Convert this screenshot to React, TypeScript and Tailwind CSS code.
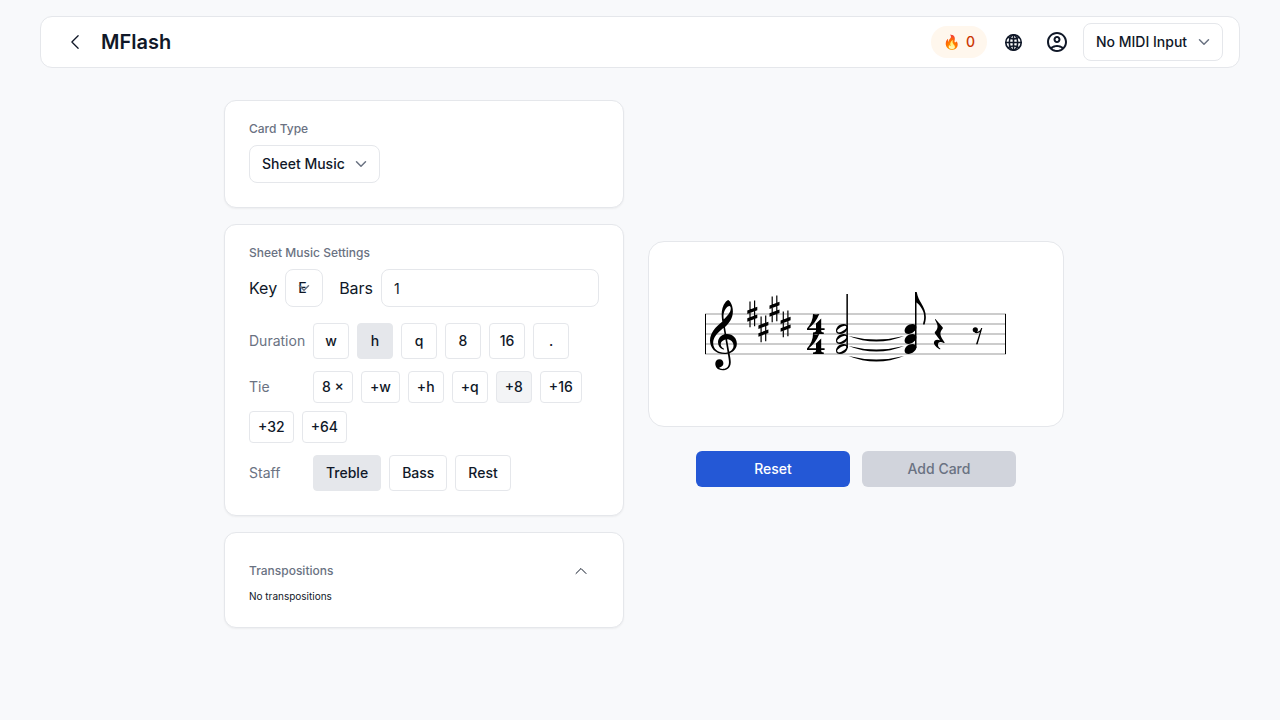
import { useState } from "react";
import type { ReactNode } from "react";
import { ChevronDown } from "lucide-react";
import { HiOutlineChevronLeft, HiOutlineChevronUp } from "react-icons/hi2";
import { IoGlobeOutline } from "react-icons/io5";
import { MdOutlineAccountCircle } from "react-icons/md";

const durations = ["w", "h", "q", "8", "16", "."];
const tieOptions = ["+w", "+h", "+q", "+8", "+16", "+32", "+64"];
const staffs = ["Treble", "Bass", "Rest"];

const G_CLEF =
  "M364 -252c-245 0 -364 165 -364 339c0 202 153 345 297 464c12 10 11 12 9 24c-7 41 -14 106 -14 164c0 104 24 229 98 311c20 22 51 48 65 48c11 0 37 -28 52 -50c41 -60 65 -146 65 -233c0 -153 -82 -280 -190 -381c-6 -6 -8 -7 -6 -19l25 -145c3 -18 3 -18 29 -18c147 0 241 -113 241 -241c0 -113 -67 -198 -168 -238c-14 -6 -15 -5 -13 -17c11 -62 29 -157 29 -214c0 -170 -130 -200 -197 -200c-151 0 -190 98 -190 163c0 62 40 115 107 115c61 0 96 -47 96 -102c0 -58 -36 -85 -67 -94c-23 -7 -32 -10 -32 -17c0 -13 26 -29 80 -29c59 0 158 18 158 166c0 47 -15 134 -27 201c-2 12 -4 11 -15 9c-20 -4 -46 -6 -68 -6zM80 20c0 -139 113 -236 288 -236c20 0 40 2 56 5c15 3 16 3 14 14l-50 298c-2 11 -4 12 -20 8c-61 -17 -100 -60 -100 -117c0 -46 30 -89 72 -107c7 -3 15 -6 15 -13c0 -6 -4 -11 -12 -11c-7 0 -19 3 -27 6c-68 23 -115 87 -115 177c0 85 57 164 145 194c18 6 18 5 15 24l-21 128c-2 11 -4 12 -14 4c-47 -38 -93 -75 -153 -142c-83 -94 -93 -173 -93 -232zM354 624c70 65 165 165 165 262c0 40 -14 62 -34 62c-58 0 -148 -110 -148 -257c0 -28 3 -50 6 -65c2 -9 5 -8 11 -2zM441 117c-12 1 -13 -2 -11 -14l49 -285c2 -12 4 -12 16 -6c56 28 94 79 94 142c0 88 -67 156 -148 163z";
const HALF_HEAD =
  "M97 -125c-55 0 -97 30 -97 83c0 52 47 167 196 167c58 0 99 -32 99 -83c0 -33 -33 -167 -198 -167zM75 -87c48 0 189 88 189 131c0 7 -3 13 -6 19c-7 12 -18 21 -37 21c-47 0 -192 -79 -192 -128c0 -7 3 -14 6 -20c7 -12 19 -23 40 -23z";
const BLACK_HEAD = "M0 -42c0 86 88 167 198 167c57 0 97 -32 97 -83c0 -85 -108 -167 -198 -167c-54 0 -97 31 -97 83z";
const EIGHTH_FLAG =
  "M238 -790c-5 -17 -22 -23 -28 -19s-16 13 -16 29c0 4 1 9 3 15c17 45 24 92 24 137c0 59 -9 116 -24 150c-36 85 -131 221 -197 233v239c0 12 8 15 19 15c10 0 18 -6 21 -22c16 -96 58 -182 109 -261c63 -100 115 -218 115 -343c0 -78 -26 -173 -26 -173z";
const SHARP =
  "M-2.9 -12.6h1.2v25.9h-1.2zM1.7 -13.6h1.2v25.9h-1.2zM-5 -3.6L5 -7.3v3.5L-5 -.1zM-5 4.2L5 .5v3.5L-5 7.7z";
const FOUR =
  "M6 0c2 .6 4 .6 6.3 0C10 6 6 11 1.8 14.2H9V9.6L14.2 4.6V14.2H17.6V16H14.2c0 1.8.6 2.4 2.6 2.6V20H6V18.6c2.2-.2 3-.8 3-2.6H0V14.4C4 10 6 5 6 0z";
const QUARTER_REST =
  "M2.2 .2L9 8C9.9 9 9.4 9.6 8.8 10.3C6.6 13 6.4 15.5 8.6 19.5L11.1 23.3C11.4 23.9 11 24.2 10.4 23.9C7.1 22.4 4.9 23 4.6 25.2C4.4 27 5.4 28.4 6.8 29.6C7.2 30.2 6.7 30.5 6.2 30.2C3.1 28.5 .4 26 .5 23.6C.7 20.8 3.6 20 6.6 21.3L1.6 14.4C1.2 13.6 1.4 13.1 1.9 12.6C4.8 9.4 5 6.6 1.9 1.2C1.4 .4 1.8 -.1 2.2 .2z";

// Glyphs are in font units (250 per staff space) with y pointing up.
function Glyph({ d, x, y }: { d: string; x: number; y: number }) {
  return <path d={d} transform={`translate(${x} ${y}) scale(0.04 -0.04)`} />;
}

function Score() {
  return (
    <svg viewBox="0 0 302 88" className="w-full max-w-[302px]" role="img" aria-label="E major chord in 4/4">
      {[24, 34, 44, 54, 64].map((y) => (
        <path key={y} d={`M0 ${y}H301`} stroke="#999999" />
      ))}
      <rect x="0" y="24" width="1" height="40" />
      <rect x="300" y="24" width="1" height="40" />

      <Glyph d={G_CLEF} x={5} y={54} />

      {[
        [47.3, 24],
        [58.4, 39],
        [69.5, 19],
        [80.6, 34]
      ].map(([x, y]) => (
        <path key={x} d={SHARP} transform={`translate(${x} ${y})`} />
      ))}

      <path d={FOUR} transform="translate(102 24)" />
      <path d={FOUR} transform="translate(102 44)" />

      {[39, 49, 59].map((y) => (
        <g key={y}>
          <Glyph d={HALF_HEAD} x={131} y={y} />
          <Glyph d={BLACK_HEAD} x={199.6} y={y} />
          <path d={`M143.5 ${y + 7}Q171.5 ${y + 18} 199 ${y + 7}Q171.5 ${y + 14} 143.5 ${y + 7}z`} />
        </g>
      ))}
      <rect x="141.4" y="4" width="1.5" height="54" />
      <rect x="210" y="2" width="1.5" height="56" />
      <Glyph d={EIGHTH_FLAG} x={210.3} y={2.3} />

      <path d={QUARTER_REST} transform="translate(228.4 29)" />
      <circle cx="270.3" cy="39.8" r="2.6" />
      <path d="M270 42C273.5 42.3 275.3 40.6 276.2 38L277.3 38L272.6 54.2H271L274.9 42C273.8 43 272 43.4 270 43z" />
    </svg>
  );
}

function Select({ id, label, options, className }: { id: string; label?: string; options: string[]; className: string }) {
  return (
    <div className="relative">
      <select
        id={id}
        aria-label={label}
        className={`block h-[38px] appearance-none rounded-lg border border-gray-200 bg-white text-sm font-medium text-gray-900 ${className}`}
      >
        {options.map((option) => (
          <option key={option}>{option}</option>
        ))}
      </select>
      <ChevronDown className="pointer-events-none absolute inset-y-0 right-[10px] my-auto size-[18px] text-gray-500" />
    </div>
  );
}

function Card({ children }: { children: ReactNode }) {
  return <section className="rounded-xl border border-gray-200 bg-white px-6 pt-5 pb-6 shadow-xs">{children}</section>;
}

function OptionButton({
  children,
  active,
  className,
  onClick
}: {
  children: ReactNode;
  active?: boolean;
  className: string;
  onClick?: () => void;
}) {
  return (
    <button
      type="button"
      onClick={onClick}
      className={`rounded border border-gray-200 text-sm font-medium text-gray-900 ${
        active ? "bg-gray-200" : ""
      } ${className}`}
    >
      {children}
    </button>
  );
}

export default function App() {
  const [duration, setDuration] = useState("h");
  const [staff, setStaff] = useState("Treble");

  return (
    <div className="min-h-screen bg-[#f8f9fb] pt-4 font-['Inter',sans-serif] text-gray-900">
      <header className="mx-10 flex items-center justify-between rounded-xl border border-gray-200 bg-white px-4 py-1.5">
        <div className="flex items-center gap-2">
          <button type="button" aria-label="Back" className="flex size-9 items-center justify-center">
            <HiOutlineChevronLeft className="size-5" />
          </button>
          <h1 className="text-xl font-semibold">MFlash</h1>
        </div>
        <div className="flex items-center gap-2">
          <div className="flex h-8 items-center gap-1.5 rounded-full bg-orange-50 px-3 text-sm font-medium text-orange-700">
            <span>🔥</span>
            <span>0</span>
          </div>
          <button type="button" aria-label="Language" className="flex size-9 items-center justify-center">
            <IoGlobeOutline className="size-[19px] [&_path]:stroke-[44px]" />
          </button>
          <button type="button" aria-label="Account" className="flex size-9 items-center justify-center">
            <MdOutlineAccountCircle className="size-6" />
          </button>
          <Select id="midi" label="MIDI input" options={["No MIDI Input"]} className="pr-[34px] pl-3" />
        </div>
      </header>

      <main className="mx-auto mt-8 flex max-w-[848px] items-center gap-6 pl-2">
        <div className="flex w-[400px] shrink-0 flex-col gap-4">
          <Card>
            <label htmlFor="card-type" className="mb-2 block text-xs font-medium text-gray-500">
              Card Type
            </label>
            <div className="flex">
              <Select id="card-type" options={["Sheet Music"]} className="pr-[34px] pl-3" />
            </div>
          </Card>

          <Card>
            <h2 className="mb-2 text-xs font-medium text-gray-500">Sheet Music Settings</h2>
            <div className="mb-4 flex items-center gap-4">
              <div className="flex items-center gap-2">
                <label htmlFor="key">Key</label>
                <Select id="key" options={["E"]} className="w-[38px] px-3" />
              </div>
              <div className="flex flex-1 items-center gap-2">
                <label htmlFor="bars">Bars</label>
                <input
                  id="bars"
                  defaultValue="1"
                  className="h-[38px] w-full min-w-0 rounded-lg border border-gray-200 px-3 text-sm"
                />
              </div>
            </div>
            <div className="flex flex-col gap-3">
              <div className="flex items-center gap-2">
                <span className="w-14 text-sm text-gray-500">Duration</span>
                {durations.map((d) => (
                  <OptionButton key={d} active={d === duration} onClick={() => setDuration(d)} className="size-9">
                    {d}
                  </OptionButton>
                ))}
              </div>
              <div className="flex flex-wrap items-center gap-2">
                <span className="w-14 text-sm text-gray-500">Tie</span>
                <OptionButton className="h-8 px-2">8 ×</OptionButton>
                {tieOptions.map((t) => (
                  <OptionButton key={t} className={t === "+8" ? "h-8 bg-gray-100 px-2" : "h-8 px-2"}>
                    {t}
                  </OptionButton>
                ))}
              </div>
              <div className="flex items-center gap-2">
                <span className="w-14 text-sm text-gray-500">Staff</span>
                {staffs.map((s) => (
                  <OptionButton key={s} active={s === staff} onClick={() => setStaff(s)} className="h-9 px-3">
                    {s}
                  </OptionButton>
                ))}
              </div>
            </div>
          </Card>

          <Card>
            <div className="flex items-center justify-between">
              <h2 className="text-xs font-medium text-gray-500">Transpositions</h2>
              <button type="button" aria-label="Collapse" className="flex size-9 items-center justify-center">
                <HiOutlineChevronUp className="size-4" />
              </button>
            </div>
            <p className="text-[10px] leading-[14px]">No transpositions</p>
          </Card>
        </div>

        <div className="flex flex-1 flex-col items-center gap-6">
          <div className="flex h-[186px] w-full items-center justify-center rounded-2xl border border-gray-200 bg-white">
            <Score />
          </div>
          <div className="grid w-80 grid-cols-2 gap-3">
            <button type="button" className="h-9 rounded-md bg-[#2458d6] text-sm font-medium text-white">
              Reset
            </button>
            <button type="button" disabled className="h-9 rounded-md bg-[#d1d4dc] text-sm font-medium text-gray-500">
              Add Card
            </button>
          </div>
        </div>
      </main>
    </div>
  );
}
